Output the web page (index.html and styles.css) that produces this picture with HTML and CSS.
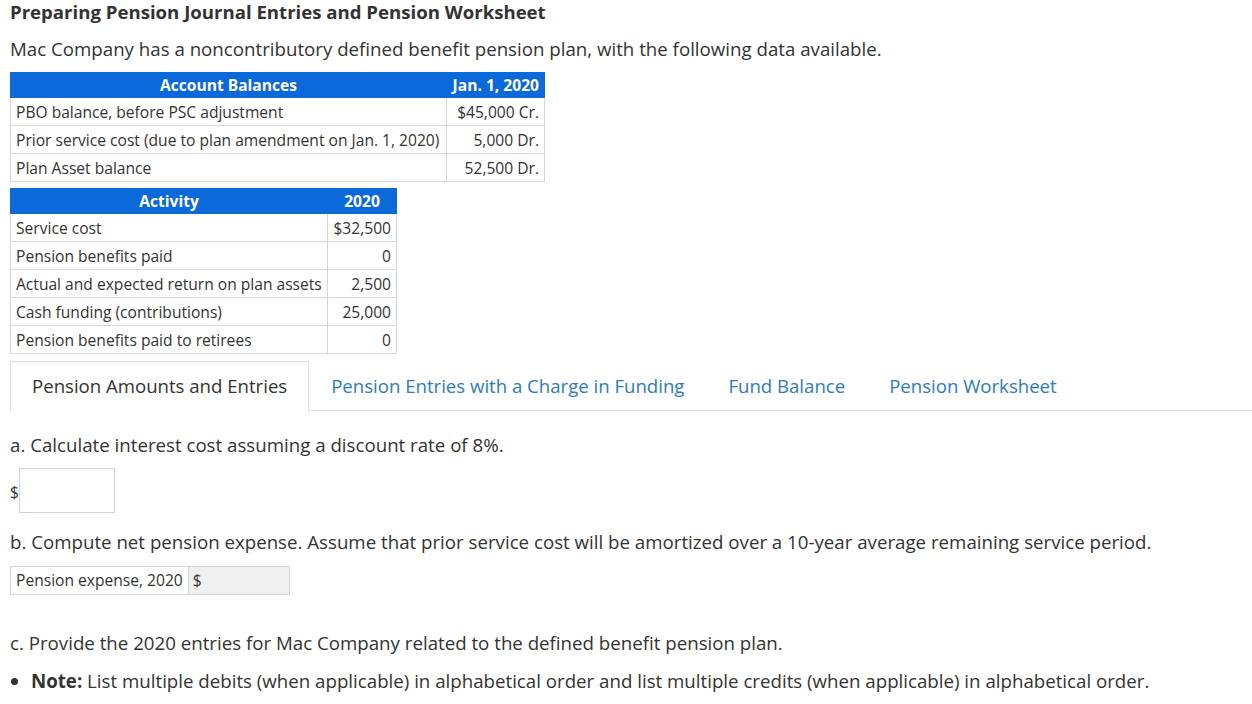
FILE: index.html
```html
<!DOCTYPE html>
<html>
<head>
<meta charset="utf-8">
<link rel="stylesheet" href="styles.css">
</head>
<body>
<div class="page">
  <h1 class="title">Preparing Pension Journal Entries and Pension Worksheet</h1>
  <p class="intro">Mac Company has a noncontributory defined benefit pension plan, with the following data available.</p>

  <table class="data t1">
    <colgroup><col class="c1"><col class="c2"></colgroup>
    <thead>
      <tr><th>Account Balances</th><th class="r">Jan. 1, 2020</th></tr>
    </thead>
    <tbody>
      <tr><td>PBO balance, before PSC adjustment</td><td class="num">$45,000 Cr.</td></tr>
      <tr><td>Prior service cost (due to plan amendment on Jan. 1, 2020)</td><td class="num">5,000 Dr.</td></tr>
      <tr><td>Plan Asset balance</td><td class="num">52,500 Dr.</td></tr>
    </tbody>
  </table>

  <table class="data t2">
    <colgroup><col class="c1"><col class="c2"></colgroup>
    <thead>
      <tr><th>Activity</th><th>2020</th></tr>
    </thead>
    <tbody>
      <tr><td>Service cost</td><td class="num">$32,500</td></tr>
      <tr><td>Pension benefits paid</td><td class="num">0</td></tr>
      <tr><td>Actual and expected return on plan assets</td><td class="num">2,500</td></tr>
      <tr><td>Cash funding (contributions)</td><td class="num">25,000</td></tr>
      <tr><td>Pension benefits paid to retirees</td><td class="num">0</td></tr>
    </tbody>
  </table>

  <div class="tabs">
    <div class="tab active">Pension Amounts and Entries</div>
    <div class="tab">Pension Entries with a Charge in Funding</div>
    <div class="tab">Fund Balance</div>
    <div class="tab">Pension Worksheet</div>
  </div>

  <p class="q qa">a. Calculate interest cost assuming a discount rate of 8%.</p>
  <div class="money"><span class="dollar">$</span><span class="box"></span></div>

  <p class="q qb">b. Compute net pension expense. Assume that prior service cost will be amortized over a 10-year average remaining service period.</p>
  <div class="expense">
    <div class="exp-label">Pension expense, 2020</div>
    <div class="exp-input">$</div>
  </div>

  <p class="q qc">c. Provide the 2020 entries for Mac Company related to the defined benefit pension plan.</p>
  <ul class="notes">
    <li><strong>Note:</strong> List multiple debits (when applicable) in alphabetical order and list multiple credits (when applicable) in alphabetical order.</li>
  </ul>
</div>
</body>
</html>
```

FILE: styles.css
```css
html, body {
  margin: 0;
  padding: 0;
  background: #fff;
}
body {
  font-family: "Open Sans", "Liberation Sans", sans-serif;
  color: #333;
}
.page {
  padding: 0 0 0 10px;
}
.title {
  margin: 0;
  font-size: 18.6px;
  font-weight: 700;
  line-height: 24px;
  color: #333;
}
.intro {
  margin: 12px 0 0 0;
  font-size: 18.7px;
  line-height: 26px;
}
.data {
  border-collapse: collapse;
  table-layout: fixed;
  font-size: 15.6px;
  color: #333;
}
.t1 { margin-top: 10px; width: 534px; }
.t1 .c1 { width: 436px; }
.t1 .c2 { width: 98px; }
.t2 { margin-top: 6px; width: 386px; }
.t2 .c1 { width: 317px; }
.t2 .c2 { width: 69px; }
.data th {
  background: #0b69d9;
  color: #fff;
  font-weight: 700;
  height: 24px;
  padding: 0 5px;
  text-align: center;
  line-height: 24px;
  border: 1px solid #0b69d9;
  white-space: nowrap;
}
.data th.r { text-align: right; }
.data td {
  border: 1px solid #d6d6d6;
  height: 27px;
  padding: 0 5px;
  line-height: 26px;
  white-space: nowrap;
}
.data td.num { text-align: right; }

.tabs {
  display: flex;
  margin-top: 7px;
  border-bottom: 1px solid #ddd;
  height: 49px;
}
.tab {
  font-size: 18.6px;
  color: #2b7bc2;
  padding: 0 21px;
  line-height: 48px;
  border: 1px solid transparent;
  border-bottom: none;
  white-space: nowrap;
}
.tab.active {
  color: #333;
  border-color: #ddd;
  background: #fff;
  margin-bottom: -1px;
  height: 49px;
}
.q {
  margin: 0;
  font-size: 18.7px;
  line-height: 26px;
}
.qa { margin-top: 21px; }
.money {
  display: flex;
  align-items: center;
  margin-top: 10px;
}
.dollar {
  font-size: 15.6px;
  width: 9px;
  padding-top: 2px;
}
.box {
  width: 94px;
  height: 43px;
  border: 1px solid #ccd3dc;
}
.qb { margin-top: 16px; }
.expense {
  display: flex;
  margin-top: 11px;
  width: 278px;
  height: 27px;
  border: 1px solid #d4d4d4;
  font-size: 15.6px;
}
.exp-label {
  padding: 0 5px;
  line-height: 27px;
  border-right: 1px solid #d4d4d4;
  white-space: nowrap;
}
.exp-input {
  flex: 1;
  background: #f0f0f0;
  padding: 0 4px;
  line-height: 27px;
}
.qc { margin-top: 35px; }
.notes {
  margin: 12px 0 0 0;
  padding-left: 21px;
  font-size: 18.7px;
  line-height: 26px;
}
.notes strong { font-weight: 700; }
```
